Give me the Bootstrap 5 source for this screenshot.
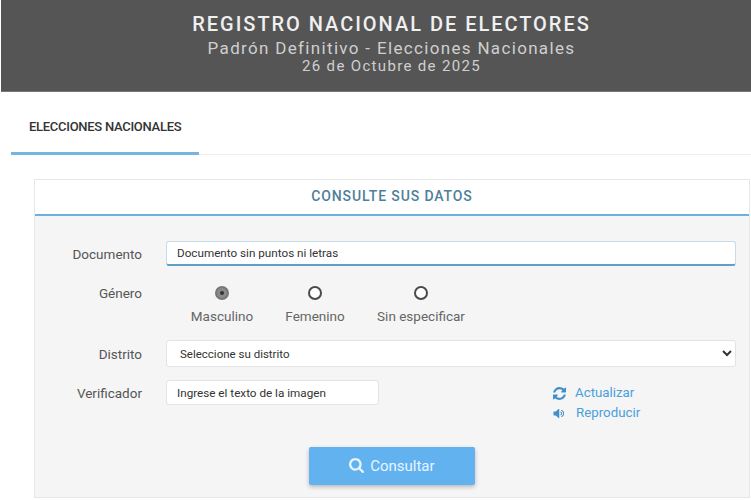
<!DOCTYPE html>
<html lang="es">
<head>
  <meta charset="UTF-8" />
  <meta name="viewport" content="width=device-width, initial-scale=1" />
  <title>Registro Nacional de Electores</title>
  <link href="https://cdn.jsdelivr.net/npm/bootstrap@5.3.2/dist/css/bootstrap.min.css" rel="stylesheet" />
  <style>
    html, body { height: 500px; overflow: hidden; }
    body { font-family: Roboto, "Liberation Sans", sans-serif; background: #fff; color: #555; padding-left: 1px; }
    .top-head { height: 92px; background: #555; color: #cfcfcf; padding: 12px 0 0 31px; border-bottom: 1px solid #777; }
    .top-head h1 { font-size: 20px; line-height: 24px; font-weight: 500; letter-spacing: 1.97px; color: #f0f0f0; margin: 0; }
    .top-head .sub { font-size: 17px; line-height: 21px; letter-spacing: 1.33px; margin-top: 2px; }
    .top-head .when { font-size: 15px; line-height: 14px; letter-spacing: 1.33px; }
    .tab-row { margin: 0 0 0 10px; height: 63px; border-bottom: 1px solid #eee; }
    .tab-on { width: 188px; height: 63px; padding: 27px 0 0 18px; border-bottom: 3px solid #75b6e0; font-size: 13px; line-height: 16px; font-weight: 500; color: #333; letter-spacing: -.28px; }
    .panel-box { margin: 24px 1px 0 33px; height: 319px; background: #f5f5f5; border: 1px solid #e8e8e8; }
    .panel-top { height: 36px; background: #fff; border-bottom: 2px solid #6bb2e2; color: #4f7f98; font-size: 14px; line-height: 33px; font-weight: 500; letter-spacing: .88px; }
    .form-zone { padding: 25px 13px 0 0; }
    .lbl { width: 107px; text-align: right; font-size: 13.5px; color: #555; flex: none; margin-bottom: 0; }
    .lbl-mid { padding-top: 2px; }
    .lbl-top { line-height: 15px; }
    .lbl-ver { line-height: 26px; }
    .inp { margin-left: 24px; border: 1px solid #e3e3e3; border-radius: 3px; background-color: #fff; font-size: 11.7px; color: #333; padding: 0 10px; box-shadow: none; }
    .inp:focus { box-shadow: none; border-color: #e3e3e3; }
    .inp-doc { height: 25px; border-color: #c8dbe8; border-bottom: 2px solid #5d9fca; flex: 1; }
    .inp-doc::placeholder, .inp-ver::placeholder { color: #333; opacity: 1; }
    .sel-dist { height: 27px; flex: 1; padding: 0 6px 0 9px; min-height: 0; color: #333; font-size: 11.5px; appearance: auto; background-image: none; }
    .ver-row { margin-top: 13px; }
    .inp-ver { height: 25px; width: 213px; flex: none; }
    .gen-row { height: 74px; padding-top: 20px; }
    .gen-opts { margin-left: 24px; }
    .gen-opt { text-align: center; font-size: 13.5px; color: #666; line-height: 17px; }
    .opt-a { width: 112px; }
    .opt-b { width: 74px; }
    .opt-c { width: 138px; }
    .gen-opt .dot { display: block; margin: 0 auto 8px; width: 14px; height: 14px; border-radius: 50%; border: 2px solid #4a4a4a; background: #fff; position: relative; }
    .gen-opt .dot.on { background: #8a8a8a; border-color: #777; }
    .gen-opt .dot.on::after { content: ""; position: absolute; left: 3px; top: 3px; width: 4px; height: 4px; border-radius: 50%; background: #333; }
    .side-links { margin-left: 174px; font-size: 13.3px; line-height: 20px; margin-top: 3px; }
    .side-links a { display: flex; align-items: center; color: #4a9fdc; text-decoration: none; }
    .side-links svg { width: 13px; height: 13px; margin-right: 9px; flex: none; }
    .side-links a + a svg { margin-right: 10px; }
    .btn-zone { margin-top: 24px; padding-left: 13px; }
    .go-btn { width: 166px; height: 38px; background: #62b2f0; border: 0; border-radius: 2px; color: #e8f5ff; font-size: 15px; box-shadow: 0 2px 4px rgba(0,0,0,.25); }
    .go-btn:hover { background: #62b2f0; color: #e8f5ff; }
    .go-btn svg { width: 15px; height: 15px; vertical-align: -2px; margin-right: 2px; }
  </style>
</head>
<body>
  <div class="top-head text-center">
    <h1>REGISTRO NACIONAL DE ELECTORES</h1>
    <div class="sub">Padrón Definitivo - Elecciones Nacionales</div>
    <div class="when">26 de Octubre de 2025</div>
  </div>

  <div class="tab-row">
    <div class="tab-on">ELECCIONES NACIONALES</div>
  </div>

  <div class="panel-box">
    <div class="panel-top text-center">CONSULTE SUS DATOS</div>
    <div class="form-zone">
      <div class="d-flex align-items-center">
        <label class="lbl lbl-mid" for="doc">Documento</label>
        <input id="doc" class="form-control inp inp-doc" type="text" placeholder="Documento sin puntos ni letras">
      </div>

      <div class="d-flex gen-row">
        <div class="lbl lbl-top">Género</div>
        <div class="gen-opts d-flex">
          <div class="gen-opt opt-a"><span class="dot on"></span>Masculino</div>
          <div class="gen-opt opt-b"><span class="dot"></span>Femenino</div>
          <div class="gen-opt opt-c"><span class="dot"></span>Sin especificar</div>
        </div>
      </div>

      <div class="d-flex align-items-center">
        <label class="lbl lbl-mid" for="dist">Distrito</label>
        <select id="dist" class="form-select inp sel-dist"><option>Seleccione su distrito</option></select>
      </div>

      <div class="d-flex ver-row">
        <label class="lbl lbl-ver" for="ver">Verificador</label>
        <input id="ver" class="form-control inp inp-ver" type="text" placeholder="Ingrese el texto de la imagen">
        <div class="side-links">
          <a href="#"><svg viewBox="128 128 1536 1536" fill="#3f8fca"><path d="M1639 1056q0 5-1 7-64 268-268 434.5t-478 166.5q-146 0-282.5-55t-243.5-157l-129 129q-19 19-45 19t-45-19-19-45v-448q0-26 19-45t45-19h448q26 0 45 19t19 45-19 45l-137 137q71 66 161 102t187 36q134 0 250-65t186-179q11-17 53-117 8-23 30-23h192q13 0 22.5 9.5t9.5 22.5zm25-800v448q0 26-19 45t-45 19h-448q-26 0-45-19t-19-45 19-45l138-138q-148-137-349-137-134 0-250 65t-186 179q-11 17-53 117-8 23-30 23h-199q-13 0-22.5-9.5t-9.5-22.5v-7q65-268 270-434.5t480-166.5q146 0 284 55.5t245 156.5l130-129q19-19 45-19t45 19 19 45z"/></svg>Actualizar</a>
          <a href="#"><svg viewBox="0 96 1728 1600" fill="#3f8fca"><path d="M832 352v1088q0 26-19 45t-45 19-45-19l-333-333h-262q-26 0-45-19t-19-45v-384q0-26 19-45t45-19h262l333-333q19-19 45-19t45 19 19 45zm384 544q0 76-42.5 141.5t-112.5 93.5q-10 5-25 5-26 0-45-18.5t-19-45.5q0-21 12-35.5t29-25 34-23 29-36 12-56.5-12-56.5-29-36-34-23-29-25-12-35.5q0-27 19-45.5t45-18.5q15 0 25 5 70 27 112.5 93t42.5 142zm256 0q0 153-85 282.5t-225 188.5q-13 5-25 5-27 0-46-19t-19-45q0-39 39-59 56-29 76-44 74-54 115.5-135.5t41.5-173.5-41.5-173.5-115.5-135.5q-20-15-76-44-39-20-39-59 0-26 19-45t45-19q13 0 26 5 140 59 225 188.5t85 282.5z"/></svg>Reproducir</a>
        </div>
      </div>

      <div class="text-center btn-zone">
        <button class="btn go-btn" type="button"><svg viewBox="64 128 1664 1664" fill="currentColor"><path d="M1216 832q0-185-131.5-316.5t-316.5-131.5-316.5 131.5-131.5 316.5 131.5 316.5 316.5 131.5 316.5-131.5 131.5-316.5zm512 832q0 52-38 90t-90 38q-54 0-90-38l-343-342q-179 124-399 124-143 0-273.5-55.5t-225-150-150-225-55.5-273.5 55.5-273.5 150-225 225-150 273.5-55.5 273.5 55.5 225 150 150 225 55.5 273.5q0 220-124 399l343 343q37 37 37 90z"/></svg> Consultar</button>
      </div>
    </div>
  </div>

  <script src="https://cdn.jsdelivr.net/npm/bootstrap@5.3.2/dist/js/bootstrap.bundle.min.js"></script>
</body>
</html>
